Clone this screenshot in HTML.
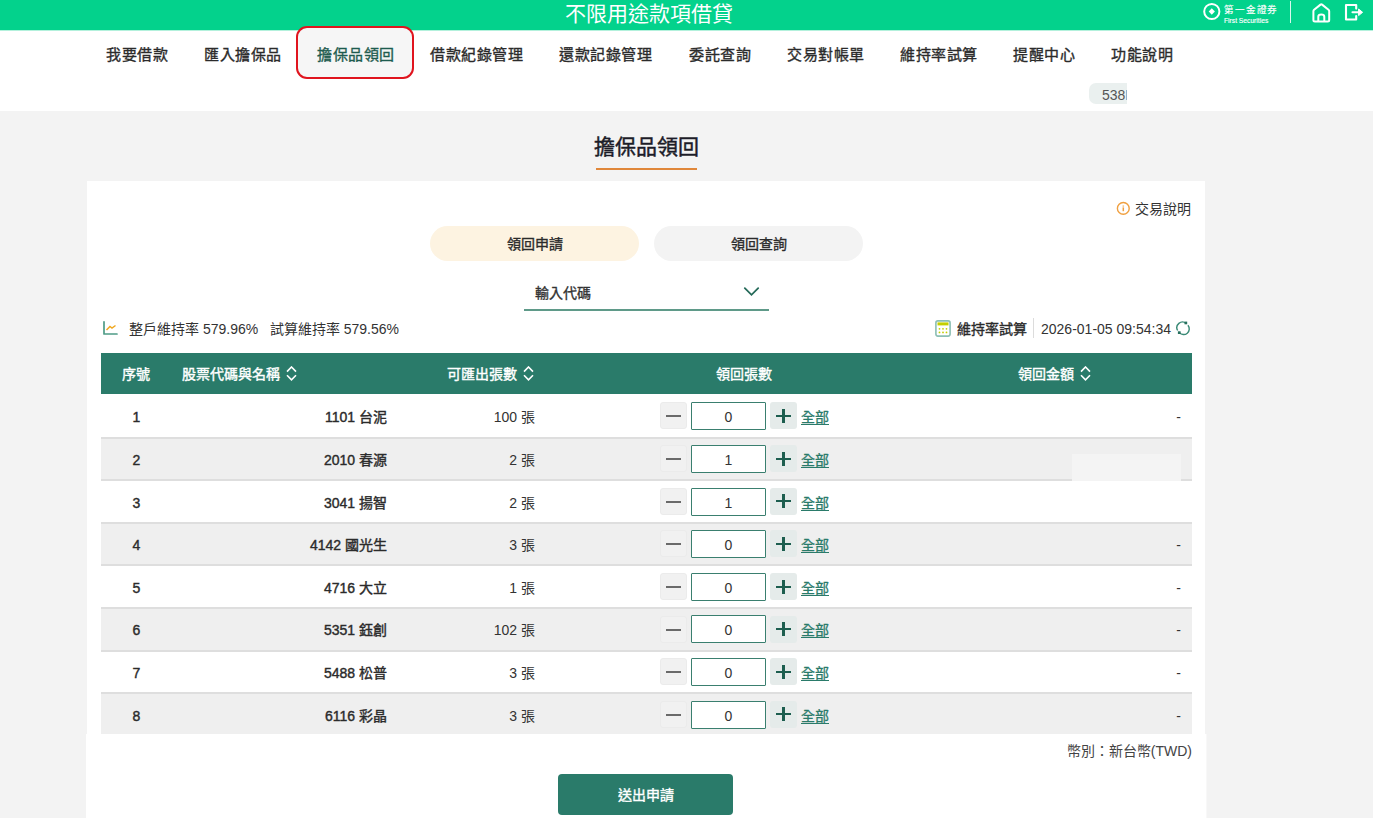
<!DOCTYPE html>
<html lang="zh-TW">
<head>
<meta charset="utf-8">
<style>
*{box-sizing:border-box;margin:0;padding:0}
html,body{width:1373px;height:818px;overflow:hidden;background:#f3f3f3;font-family:"Liberation Sans",sans-serif;color:#333}
.abs{position:absolute}
#topbar{position:absolute;left:0;top:0;width:1373px;height:30px;background:#03d28c}
#title{position:absolute;left:0;top:0;width:1297px;text-align:center;color:#fff;font-size:21px;line-height:27px}
#nav{position:absolute;left:0;top:30px;width:1373px;height:81px;background:#fff}
.nv{position:absolute;top:13.5px;font-size:15px;letter-spacing:0.6px;font-weight:normal;-webkit-text-stroke:0.35px currentColor;color:#2b2b2b;line-height:22px;white-space:nowrap}
#active{position:absolute;left:296px;top:-4px;width:118px;height:53px;border:2px solid #e0141e;border-radius:11px;background:#f6f6f6}
#badge{position:absolute;left:1089px;top:53px;width:38px;height:21px;background:#eaf0ef;border-radius:7px 0 0 7px;overflow:hidden}
#pagetitle{position:absolute;left:0;top:133px;width:1292px;text-align:center;font-size:21px;font-weight:normal;-webkit-text-stroke:0.45px currentColor;color:#1c1c28;line-height:28px}
#uline{position:absolute;left:596px;top:168px;width:101px;height:2px;background:#e0873a}
#card{position:absolute;left:87px;top:181px;width:1118px;height:637px;background:#fff}
.tab{position:absolute;top:226px;width:209px;height:35px;border-radius:18px;text-align:center;font-size:14px;line-height:36px;color:#2b2b2b;font-weight:normal;-webkit-text-stroke:0.35px currentColor}
.t14{font-size:14px;line-height:20px;white-space:nowrap}
#thead{position:absolute;left:101px;top:353px;width:1091px;height:41px;background:#2a7b6a}
.th{position:absolute;top:11px;color:#fff;font-weight:normal;-webkit-text-stroke:0.4px #fff;font-size:14px;line-height:20px;white-space:nowrap}
.row{position:absolute;left:101px;width:1091px}
.row.alt{background:#efefef}
.bd{position:absolute;left:101px;width:1091px;height:2px;background:#dedede}
.cell{position:absolute;font-size:14px;line-height:20px;white-space:nowrap}
.num,.name{font-weight:normal;-webkit-text-stroke:0.4px currentColor;color:#2b2b2b}
.mbtn{position:absolute;left:660px;width:27px;height:27px;background:#f1f1f1;border:1px solid #ebebeb;border-radius:3px}
.mbtn:after{content:"";position:absolute;left:5px;top:12px;width:15px;height:2px;background:#6a6a6a}
.inp{position:absolute;left:691px;width:75px;height:28px;border:1.5px solid #3a7f6f;border-radius:1px;background:#fff;text-align:center;font-size:14px;line-height:28px;color:#333}
.pbtn{position:absolute;left:770px;width:27px;height:27px;background:#e5ebea;border-radius:3px}
.pbtn:before{content:"";position:absolute;left:6px;top:12.5px;width:15px;height:2.2px;background:#1d5e4f}
.pbtn:after{content:"";position:absolute;left:12.4px;top:6.5px;width:2.2px;height:14px;background:#1d5e4f}
.all{position:absolute;left:801px;font-size:14px;line-height:20px;color:#2a7b6a;text-decoration:underline;text-underline-offset:2px;-webkit-text-stroke:0.3px currentColor}
#submit{position:absolute;left:558px;top:774px;width:175px;height:41px;background:#2a7b6a;border-radius:4px;color:#fff;font-weight:normal;-webkit-text-stroke:0.4px #fff;font-size:14px;line-height:43px;text-align:center}
.med{-webkit-text-stroke:0.35px currentColor}
</style>
</head>
<body>
<div id="topbar">
  <div id="title">不限用途款項借貸</div>

  <svg class="abs" style="left:1202px;top:2px" width="20" height="19" viewBox="0 0 20 19"><circle cx="9.8" cy="9.5" r="7.6" fill="none" stroke="#fff" stroke-width="2"/><path d="M9.8,6.3 L12.9,9.5 L9.8,12.7 L6.7,9.5 Z" fill="#fff"/></svg>
  <div class="abs" style="left:1224px;top:4px;color:#fff;font-size:9.5px;line-height:12px;letter-spacing:0.85px;-webkit-text-stroke:0.2px #fff">第一金證券</div>
  <div class="abs" style="left:1224px;top:17px;color:#fff;font-size:6.7px;line-height:8px;-webkit-text-stroke:0.15px #fff">First Securities</div>
  <div class="abs" style="left:1290px;top:1px;width:1px;height:22px;background:rgba(255,255,255,0.85)"></div>
  <svg class="abs" style="left:1311px;top:2px" width="21" height="21" viewBox="0 0 21 21"><path d="M2.4,9.3 Q2.4,8.4 3.1,7.8 L9.5,2.6 Q10.3,2 11.1,2.6 L17.5,7.8 Q18.2,8.4 18.2,9.3 L18.2,17.9 Q18.2,19.4 16.7,19.4 L3.9,19.4 Q2.4,19.4 2.4,17.9 Z" fill="none" stroke="#fff" stroke-width="2" stroke-linejoin="round"/><path d="M7.3,19.4 L7.3,14.7 Q7.3,12.6 10.3,12.6 Q13.3,12.6 13.3,14.7 L13.3,19.4" fill="none" stroke="#fff" stroke-width="2"/></svg>
  <svg class="abs" style="left:1343px;top:3px" width="22" height="19" viewBox="0 0 22 19"><path d="M13.2,5.6 L13.2,2 L3,2 L3,16.5 L13.2,16.5 L13.2,13" fill="none" stroke="#fff" stroke-width="2.1" stroke-linecap="round" stroke-linejoin="round"/><path d="M9.5,9.3 L17,9.3" stroke="#fff" stroke-width="2.1" stroke-linecap="round"/><path d="M15.6,6 L19.6,9.3 L15.6,12.6 Z" fill="#fff" stroke="#fff" stroke-width="1" stroke-linejoin="round"/></svg>
</div>
<div id="nav">
  <div class="abs" style="left:0;top:0;width:1373px;height:1px;background:rgba(3,210,140,0.3)"></div>
  <div id="active"></div>
  <div class="nv" style="left:106px">我要借款</div>
  <div class="nv" style="left:204px">匯入擔保品</div>
  <div class="nv" style="left:317px;color:#1e5c4f">擔保品領回</div>
  <div class="nv" style="left:430px">借款紀錄管理</div>
  <div class="nv" style="left:559px">還款記錄管理</div>
  <div class="nv" style="left:689px">委託查詢</div>
  <div class="nv" style="left:787px">交易對帳單</div>
  <div class="nv" style="left:900px">維持率試算</div>
  <div class="nv" style="left:1013px">提醒中心</div>
  <div class="nv" style="left:1111px">功能說明</div>
  <div id="badge"><span class="abs" style="left:13px;top:3.5px;font-size:14px;line-height:17px;color:#555;white-space:nowrap">538</span><span class="abs" style="left:37px;top:7px;width:1px;height:10px;background:#8fb0cc"></span></div>
</div>
<div id="pagetitle">擔保品領回</div>
<div id="uline"></div>
<div id="card"></div>
<div class="abs" style="left:86px;top:734px;width:1px;height:84px;background:#fff"></div>
<div class="abs" style="left:1205px;top:734px;width:1px;height:84px;background:#fff"></div>
<div class="abs" style="left:1206px;top:734px;width:1px;height:84px;background:#f8f8f8"></div>

<!-- info -->
<svg class="abs" style="left:1116px;top:201px" width="15" height="15" viewBox="0 0 15 15"><circle cx="7.3" cy="7.4" r="5.9" fill="none" stroke="#f0a040" stroke-width="1.4"/><rect x="6.55" y="4.2" width="1.5" height="2.4" fill="#f0a040" opacity="0.55"/><rect x="6.55" y="6.6" width="1.5" height="3.6" fill="#f0a040"/></svg>
<div class="abs t14" style="left:1135px;top:199px;color:#333">交易說明</div>
<!-- tabs -->
<div class="tab" style="left:430px;background:#fdf3e1">領回申請</div>
<div class="tab" style="left:654px;background:#f3f3f3">領回查詢</div>
<!-- select -->
<div class="abs t14 med" style="left:535px;top:283px;color:#333">輸入代碼</div>
<svg class="abs" style="left:743px;top:286px" width="17" height="11" viewBox="0 0 17 11"><polyline points="1.8,2.2 8.5,8.8 15.2,2.2" fill="none" stroke="#256a59" stroke-width="1.8" stroke-linecap="round"/></svg>
<div class="abs" style="left:524px;top:309.3px;width:245px;height:1.5px;background:#5f9a89"></div>
<!-- stats -->
<svg class="abs" style="left:102px;top:320px" width="16" height="16" viewBox="0 0 16 16"><polyline points="2,1.8 2,14 15,14" fill="none" stroke="#4f9c87" stroke-width="1.7" stroke-linecap="round" stroke-linejoin="round"/><polyline points="4.5,10 8,6.5 10,8 13.5,5.5" fill="none" stroke="#f0a820" stroke-width="1.5"/></svg>
<div class="abs t14" style="left:129px;top:319px;color:#333">整戶維持率 579.96%&nbsp;&nbsp; 試算維持率 579.56%</div>
<svg class="abs" style="left:935px;top:320px" width="16" height="17" viewBox="0 0 16 17"><rect x="0.9" y="0.9" width="14.2" height="15.2" rx="2" fill="#fff" stroke="#8cbfb4" stroke-width="1.6"/><rect x="2.5" y="2.4" width="11" height="3" fill="#c3cf00"/><g fill="#c3cf00"><circle cx="4.5" cy="8.8" r="0.9"/><circle cx="8" cy="8.8" r="0.9"/><circle cx="11.5" cy="8.8" r="0.9"/><circle cx="4.5" cy="12.4" r="0.9"/><circle cx="8" cy="12.4" r="0.9"/><circle cx="11.5" cy="12.4" r="0.9"/></g></svg>
<div class="abs t14 med" style="left:957px;top:318.5px;color:#2b2b2b">維持率試算</div>
<div class="abs" style="left:1033px;top:318px;width:1px;height:20px;background:#dcdcdc"></div>
<div class="abs t14" style="left:1041px;top:319px;color:#333">2026-01-05 09:54:34</div>
<svg class="abs" style="left:1175px;top:320px" width="16" height="16" viewBox="0 0 16 16"><path d="M11.1,3.4 A5.6,5.6 0 0 0 2.65,10.5" fill="none" stroke="#3a8a76" stroke-width="1.4"/><path d="M4.4,12.6 A5.6,5.6 0 0 0 12.9,5.3" fill="none" stroke="#3a8a76" stroke-width="1.4"/><rect x="9.5" y="1.6" width="2.7" height="2.7" fill="#26705e"/><rect x="2.9" y="11.3" width="2.7" height="2.7" fill="#26705e"/></svg>
<!-- table head -->
<div id="thead">
  <div class="th" style="left:21px">序號</div>
  <div class="th" style="left:81px">股票代碼與名稱</div>
  <svg class="abs" style="left:185px;top:13px" width="12" height="15" viewBox="0 0 12 15"><polyline points="1,5.6 5.5,1 10,5.6" fill="none" stroke="#fff" stroke-width="1.6"/><polyline points="1,9.2 5.5,13.8 10,9.2" fill="none" stroke="#fff" stroke-width="1.6"/></svg>
  <div class="th" style="left:346px">可匯出張數</div>
  <svg class="abs" style="left:422px;top:13px" width="12" height="15" viewBox="0 0 12 15"><polyline points="1,5.6 5.5,1 10,5.6" fill="none" stroke="#fff" stroke-width="1.6"/><polyline points="1,9.2 5.5,13.8 10,9.2" fill="none" stroke="#fff" stroke-width="1.6"/></svg>
  <div class="th" style="left:615px">領回張數</div>
  <div class="th" style="left:917px">領回金額</div>
  <svg class="abs" style="left:979px;top:13px" width="12" height="15" viewBox="0 0 12 15"><polyline points="1,5.6 5.5,1 10,5.6" fill="none" stroke="#fff" stroke-width="1.6"/><polyline points="1,9.2 5.5,13.8 10,9.2" fill="none" stroke="#fff" stroke-width="1.6"/></svg>
</div>
<div class="row" style="top:394px;height:43.0px"></div>
<div class="cell num" style="left:101px;width:71px;text-align:center;top:407.0px">1</div>
<div class="cell name" style="left:200px;width:187px;text-align:right;top:407.0px">1101 台泥</div>
<div class="cell cnt" style="left:400px;width:135px;text-align:right;top:407.0px">100 張</div>
<div class="mbtn" style="top:402.2px"></div>
<div class="inp" style="top:402.0px">0</div>
<div class="pbtn" style="top:402.2px"></div>
<div class="all" style="top:407.0px">全部</div>
<div class="cell amt" style="left:1000px;width:181px;text-align:right;top:407.0px">-</div>
<div class="row alt" style="top:437px;height:42.6px"></div>
<div class="bd" style="top:436.5px"></div>
<div class="cell num" style="left:101px;width:71px;text-align:center;top:450.0px">2</div>
<div class="cell name" style="left:200px;width:187px;text-align:right;top:450.0px">2010 春源</div>
<div class="cell cnt" style="left:400px;width:135px;text-align:right;top:450.0px">2 張</div>
<div class="mbtn" style="top:445.2px"></div>
<div class="inp" style="top:445.0px">1</div>
<div class="pbtn" style="top:445.2px"></div>
<div class="all" style="top:450.0px">全部</div>
<div class="row" style="top:479.6px;height:42.6px"></div>
<div class="bd" style="top:479.1px"></div>
<div class="cell num" style="left:101px;width:71px;text-align:center;top:492.6px">3</div>
<div class="cell name" style="left:200px;width:187px;text-align:right;top:492.6px">3041 揚智</div>
<div class="cell cnt" style="left:400px;width:135px;text-align:right;top:492.6px">2 張</div>
<div class="mbtn" style="top:487.8px"></div>
<div class="inp" style="top:487.6px">1</div>
<div class="pbtn" style="top:487.8px"></div>
<div class="all" style="top:492.6px">全部</div>
<div class="row alt" style="top:522.2px;height:42.6px"></div>
<div class="bd" style="top:521.7px"></div>
<div class="cell num" style="left:101px;width:71px;text-align:center;top:535.2px">4</div>
<div class="cell name" style="left:200px;width:187px;text-align:right;top:535.2px">4142 國光生</div>
<div class="cell cnt" style="left:400px;width:135px;text-align:right;top:535.2px">3 張</div>
<div class="mbtn" style="top:530.4px"></div>
<div class="inp" style="top:530.2px">0</div>
<div class="pbtn" style="top:530.4px"></div>
<div class="all" style="top:535.2px">全部</div>
<div class="cell amt" style="left:1000px;width:181px;text-align:right;top:535.2px">-</div>
<div class="row" style="top:564.8px;height:42.6px"></div>
<div class="bd" style="top:564.3px"></div>
<div class="cell num" style="left:101px;width:71px;text-align:center;top:577.8px">5</div>
<div class="cell name" style="left:200px;width:187px;text-align:right;top:577.8px">4716 大立</div>
<div class="cell cnt" style="left:400px;width:135px;text-align:right;top:577.8px">1 張</div>
<div class="mbtn" style="top:573.0px"></div>
<div class="inp" style="top:572.8px">0</div>
<div class="pbtn" style="top:573.0px"></div>
<div class="all" style="top:577.8px">全部</div>
<div class="cell amt" style="left:1000px;width:181px;text-align:right;top:577.8px">-</div>
<div class="row alt" style="top:607.4px;height:42.6px"></div>
<div class="bd" style="top:606.9px"></div>
<div class="cell num" style="left:101px;width:71px;text-align:center;top:620.4px">6</div>
<div class="cell name" style="left:200px;width:187px;text-align:right;top:620.4px">5351 鈺創</div>
<div class="cell cnt" style="left:400px;width:135px;text-align:right;top:620.4px">102 張</div>
<div class="mbtn" style="top:615.6px"></div>
<div class="inp" style="top:615.4px">0</div>
<div class="pbtn" style="top:615.6px"></div>
<div class="all" style="top:620.4px">全部</div>
<div class="cell amt" style="left:1000px;width:181px;text-align:right;top:620.4px">-</div>
<div class="row" style="top:650px;height:42.6px"></div>
<div class="bd" style="top:649.5px"></div>
<div class="cell num" style="left:101px;width:71px;text-align:center;top:663.0px">7</div>
<div class="cell name" style="left:200px;width:187px;text-align:right;top:663.0px">5488 松普</div>
<div class="cell cnt" style="left:400px;width:135px;text-align:right;top:663.0px">3 張</div>
<div class="mbtn" style="top:658.2px"></div>
<div class="inp" style="top:658.0px">0</div>
<div class="pbtn" style="top:658.2px"></div>
<div class="all" style="top:663.0px">全部</div>
<div class="cell amt" style="left:1000px;width:181px;text-align:right;top:663.0px">-</div>
<div class="row alt" style="top:692.6px;height:41.4px"></div>
<div class="bd" style="top:692.1px"></div>
<div class="cell num" style="left:101px;width:71px;text-align:center;top:705.6px">8</div>
<div class="cell name" style="left:200px;width:187px;text-align:right;top:705.6px">6116 彩晶</div>
<div class="cell cnt" style="left:400px;width:135px;text-align:right;top:705.6px">3 張</div>
<div class="mbtn" style="top:700.8px"></div>
<div class="inp" style="top:700.6px">0</div>
<div class="pbtn" style="top:700.8px"></div>
<div class="all" style="top:705.6px">全部</div>
<div class="cell amt" style="left:1000px;width:181px;text-align:right;top:705.6px">-</div>
<div class="abs" style="left:1072px;top:454px;width:109px;height:27px;background:#f4f4f4"></div>
<div class="abs t14" style="right:181px;top:741px;color:#444">幣別：新台幣(TWD)</div>
<div id="submit">送出申請</div>
</body>
</html>
